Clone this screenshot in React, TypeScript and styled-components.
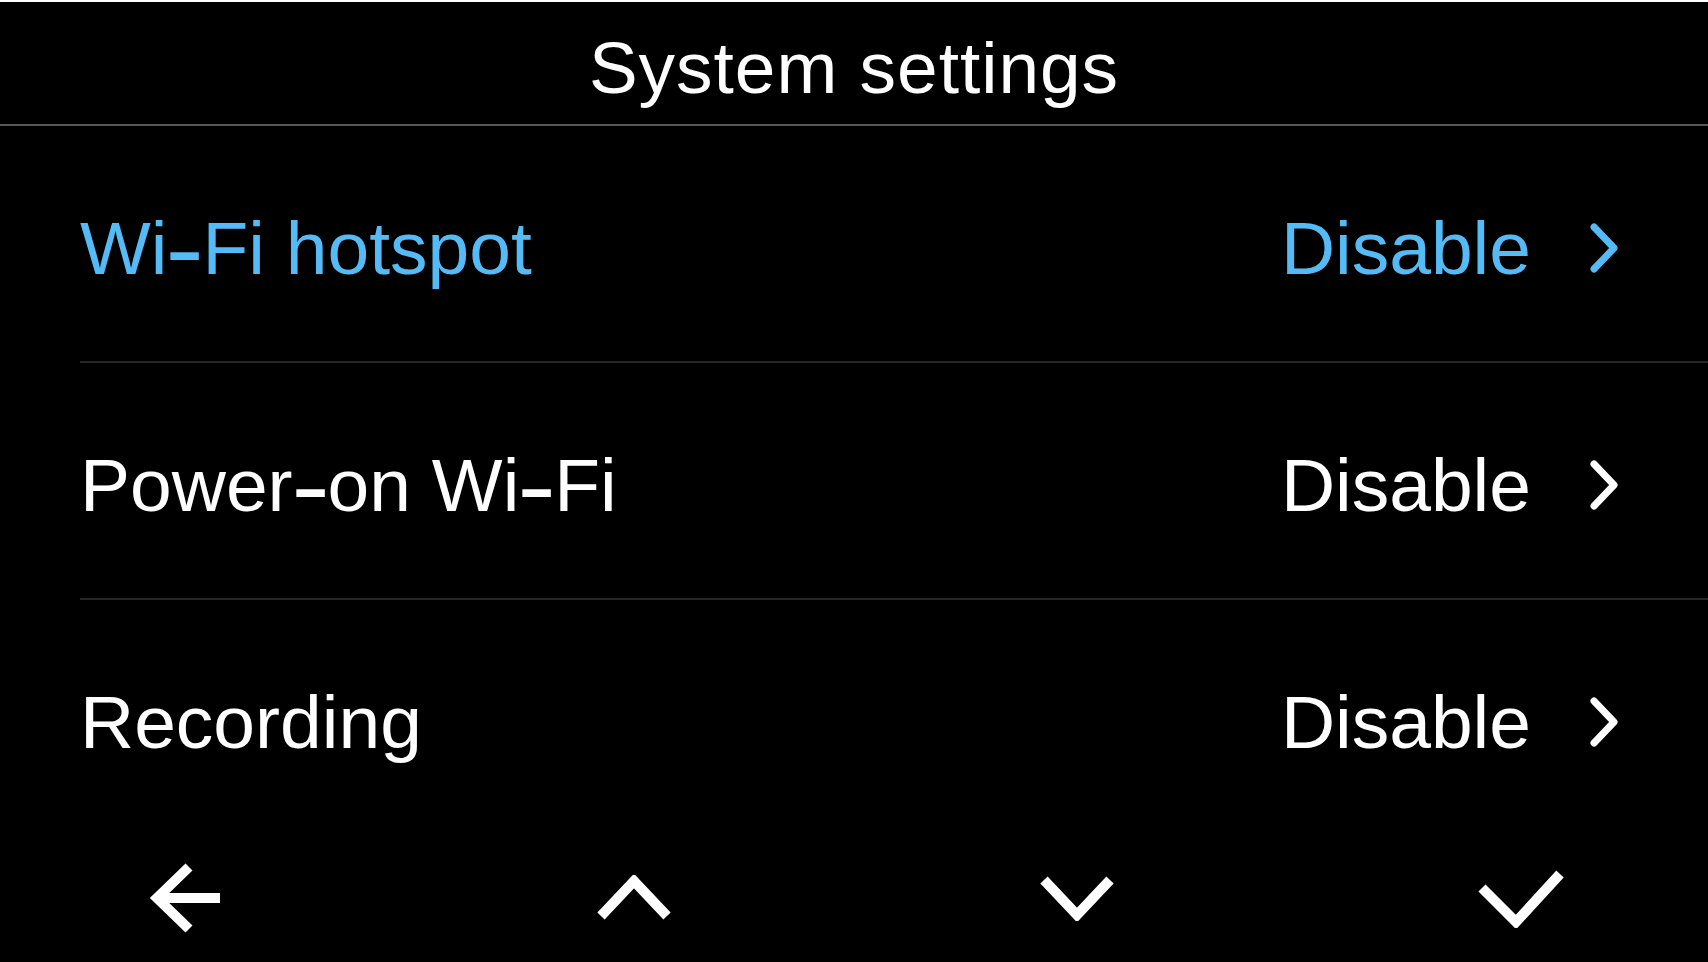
import React from "react";
import styled, { createGlobalStyle } from "styled-components";

const GlobalStyle = createGlobalStyle`
  html, body {
    margin: 0;
    padding: 0;
    background: #000;
  }
  body {
    font-family: "Liberation Sans", Arial, sans-serif;
    overflow: hidden;
  }
`;

const Screen = styled.div`
  width: 1708px;
  height: 962px;
  background: #000;
  border-top: 2px solid #ffffff;
  box-sizing: border-box;
  display: flex;
  flex-direction: column;
`;

const Header = styled.header`
  height: 124px;
  flex: none;
  display: flex;
  align-items: center;
  justify-content: center;
  border-bottom: 2px solid #565656;
  box-sizing: border-box;
`;

const Title = styled.h1`
  margin: 0;
  font-family: "Liberation Sans", Arial, sans-serif;
  font-weight: 400;
  font-size: 73px;
  letter-spacing: 1px;
  color: #ffffff;
  line-height: 1;
  padding-top: 8px;
`;

const List = styled.div`
  display: flex;
  flex-direction: column;
  padding-left: 80px;
`;

const Row = styled.div<{ $last?: boolean }>`
  height: ${(p) => (p.$last ? "235px" : "237px")};
  box-sizing: border-box;
  display: flex;
  align-items: center;
  padding-right: 90px;
  padding-top: 8px;
  border-bottom: ${(p) => (p.$last ? "none" : "2px solid #262626")};
`;

const Label = styled.span<{ $active?: boolean }>`
  flex: 1;
  font-size: 75px;
  color: ${(p) => (p.$active ? "#55bbf6" : "#ffffff")};
  white-space: nowrap;
`;

const Dash = styled.span`
  display: inline-block;
  transform: scale(1.55, 1.3);
  margin: 0 5px;
`;

const Value = styled.span<{ $active?: boolean }>`
  font-size: 75px;
  color: ${(p) => (p.$active ? "#55bbf6" : "#ffffff")};
  white-space: nowrap;
`;

const Chevron = styled.svg<{ $active?: boolean }>`
  width: 28px;
  height: 50px;
  margin-left: 59px;
  flex: none;
  color: ${(p) => (p.$active ? "#55bbf6" : "#ffffff")};
`;

const NavBar = styled.nav`
  flex: 1;
  display: flex;
  align-items: center;
  justify-content: flex-start;
  padding: 0 0 2px 149px;
`;

const NavIcon = styled.svg<{ $gap?: number }>`
  display: block;
  flex: none;
  margin-left: ${(p) => p.$gap ?? 0}px;
  color: #ffffff;
`;

const RowChevron = ({ active }: { active?: boolean }) => (
  <Chevron $active={active} viewBox="0 0 28 50">
    <path
      d="M4 4 L24 25 L4 46"
      fill="none"
      stroke="currentColor"
      strokeWidth="7"
      strokeLinecap="round"
      strokeLinejoin="round"
    />
  </Chevron>
);

const withDashes = (text: string) => {
  const parts = text.split("-");
  return parts.map((p, i) => (
    <React.Fragment key={i}>
      {p}
      {i < parts.length - 1 && <Dash>-</Dash>}
    </React.Fragment>
  ));
};

const items = [
  { label: "Wi-Fi hotspot", value: "Disable", active: true },
  { label: "Power-on Wi-Fi", value: "Disable" },
  { label: "Recording", value: "Disable" },
];

export default function App() {
  return (
    <>
      <GlobalStyle />
      <Screen>
        <Header>
          <Title>System settings</Title>
        </Header>
        <List>
          {items.map((it, i) => (
            <Row key={it.label} $last={i === items.length - 1}>
              <Label $active={it.active}>{withDashes(it.label)}</Label>
              <Value $active={it.active}>{it.value}</Value>
              <RowChevron active={it.active} />
            </Row>
          ))}
        </List>
        <NavBar>
          <NavIcon width="72" height="70" viewBox="0 0 72 70">
            <path
              d="M40 4 L8 35 L40 66"
              fill="none"
              stroke="currentColor"
              strokeWidth="10"
              strokeLinejoin="miter"
              strokeMiterlimit="10"
            />
            <path d="M8 35 H71" fill="none" stroke="currentColor" strokeWidth="10" />
          </NavIcon>
          <NavIcon $gap={376} width="74" height="46" viewBox="0 0 74 46">
            <path
              d="M4 41 L37 6 L70 41"
              fill="none"
              stroke="currentColor"
              strokeWidth="10"
              strokeLinejoin="miter"
              strokeMiterlimit="10"
            />
          </NavIcon>
          <NavIcon $gap={369} width="74" height="46" viewBox="0 0 74 46">
            <path
              d="M4 5 L37 40 L70 5"
              fill="none"
              stroke="currentColor"
              strokeWidth="10"
              strokeLinejoin="miter"
              strokeMiterlimit="10"
            />
          </NavIcon>
          <NavIcon $gap={364} width="86" height="60" viewBox="0 0 86 60">
            <path
              d="M4 20 L38 54 L82 6"
              fill="none"
              stroke="currentColor"
              strokeWidth="10"
              strokeLinejoin="miter"
              strokeMiterlimit="10"
            />
          </NavIcon>
        </NavBar>
      </Screen>
    </>
  );
}
